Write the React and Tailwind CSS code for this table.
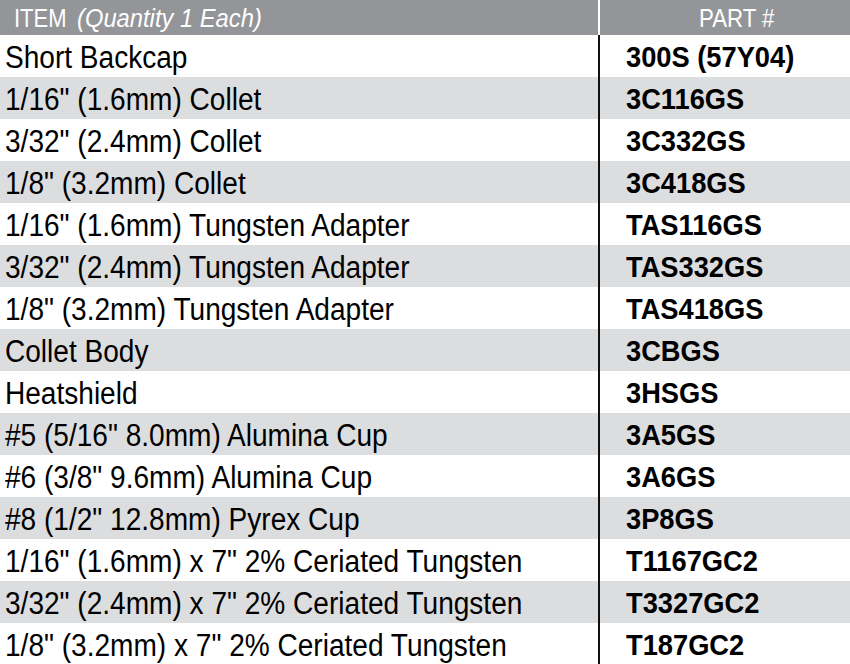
import React from "react";

const rows = [
  ["Short Backcap", "300S (57Y04)"],
  ['1/16" (1.6mm) Collet', "3C116GS"],
  ['3/32" (2.4mm) Collet', "3C332GS"],
  ['1/8" (3.2mm) Collet', "3C418GS"],
  ['1/16" (1.6mm) Tungsten Adapter', "TAS116GS"],
  ['3/32" (2.4mm) Tungsten Adapter', "TAS332GS"],
  ['1/8" (3.2mm) Tungsten Adapter', "TAS418GS"],
  ["Collet Body", "3CBGS"],
  ["Heatshield", "3HSGS"],
  ['#5 (5/16" 8.0mm) Alumina Cup', "3A5GS"],
  ['#6 (3/8" 9.6mm) Alumina Cup', "3A6GS"],
  ['#8 (1/2" 12.8mm) Pyrex Cup', "3P8GS"],
  ['1/16" (1.6mm) x 7" 2% Ceriated Tungsten', "T1167GC2"],
  ['3/32" (2.4mm) x 7" 2% Ceriated Tungsten', "T3327GC2"],
  ['1/8" (3.2mm) x 7" 2% Ceriated Tungsten', "T187GC2"],
];

export default function App() {
  return (
    <div
      className="w-[850px] h-[664px] overflow-hidden bg-white text-black"
      style={{ fontFamily: '"Liberation Sans", Arial, sans-serif' }}
    >
      <div className="flex h-[35px] bg-[#939598] text-white">
        <div className="w-[598px] pl-[14px] pt-[2px] flex items-center text-[25px] leading-none whitespace-nowrap">
          <span className="inline-block origin-left scale-x-[0.88]">ITEM</span>
          <span className="inline-block italic ml-[3px] origin-left scale-x-[0.95]">(Quantity 1 Each)</span>
        </div>
        <div className="w-[2px] bg-white" />
        <div className="flex-1 flex items-center pt-[2px] pl-[99px] text-[25px] leading-none whitespace-nowrap">
          <span className="inline-block origin-left scale-x-[0.89]">PART #</span>
        </div>
      </div>
      {rows.map(([item, part], i) => (
        <div
          key={i}
          className={`flex h-[42px] ${i % 2 === 1 ? "bg-[#dcdddf]" : "bg-white"}`}
        >
          <div className="w-[598px] pl-[5px] flex items-center pt-[2px] text-[31px] leading-none whitespace-nowrap">
            <span className="inline-block origin-left scale-x-[0.905]">{item}</span>
          </div>
          <div className="w-[2px] bg-[#111]" />
          <div className="flex-1 flex items-center pl-[26px] pt-[2px] text-[29px] font-bold leading-none whitespace-nowrap">
            <span className="inline-block origin-left scale-x-[0.94]">{part}</span>
          </div>
        </div>
      ))}
    </div>
  );
}
